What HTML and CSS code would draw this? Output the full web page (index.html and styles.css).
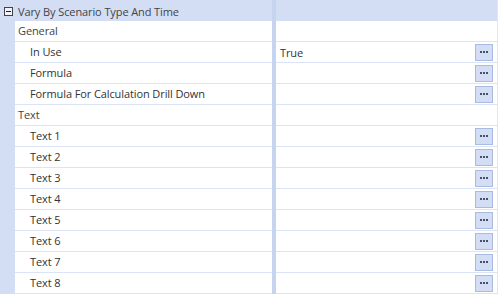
FILE: index.html
```html
<!DOCTYPE html>
<html lang="en">
  <head>
    <meta charset="UTF-8" />
    <title>Property Grid</title>
    <link rel="stylesheet" href="styles.css">
  </head>
  <body>
    <div class="grid">
      <div class="row header">
        <div class="gutter"><span class="toggle"></span></div>
        <div class="name">Vary By Scenario Type And Time</div>
        <div class="split"></div>
        <div class="value"></div>
      </div>

      <div class="row category">
        <div class="gutter"></div>
        <div class="name">General</div>
        <div class="split"></div>
        <div class="value"></div>
      </div>
      <div class="row">
        <div class="gutter"></div>
        <div class="name">In Use</div>
        <div class="split"></div>
        <div class="value"><span>True</span><button class="more"><i></i><i></i><i></i></button></div>
      </div>
      <div class="row">
        <div class="gutter"></div>
        <div class="name">Formula</div>
        <div class="split"></div>
        <div class="value"><span></span><button class="more"><i></i><i></i><i></i></button></div>
      </div>
      <div class="row">
        <div class="gutter"></div>
        <div class="name">Formula For Calculation Drill Down</div>
        <div class="split"></div>
        <div class="value"><span></span><button class="more"><i></i><i></i><i></i></button></div>
      </div>

      <div class="row category">
        <div class="gutter"></div>
        <div class="name">Text</div>
        <div class="split"></div>
        <div class="value"></div>
      </div>
      <div class="row">
        <div class="gutter"></div>
        <div class="name">Text 1</div>
        <div class="split"></div>
        <div class="value"><span></span><button class="more"><i></i><i></i><i></i></button></div>
      </div>
      <div class="row">
        <div class="gutter"></div>
        <div class="name">Text 2</div>
        <div class="split"></div>
        <div class="value"><span></span><button class="more"><i></i><i></i><i></i></button></div>
      </div>
      <div class="row">
        <div class="gutter"></div>
        <div class="name">Text 3</div>
        <div class="split"></div>
        <div class="value"><span></span><button class="more"><i></i><i></i><i></i></button></div>
      </div>
      <div class="row">
        <div class="gutter"></div>
        <div class="name">Text 4</div>
        <div class="split"></div>
        <div class="value"><span></span><button class="more"><i></i><i></i><i></i></button></div>
      </div>
      <div class="row">
        <div class="gutter"></div>
        <div class="name">Text 5</div>
        <div class="split"></div>
        <div class="value"><span></span><button class="more"><i></i><i></i><i></i></button></div>
      </div>
      <div class="row">
        <div class="gutter"></div>
        <div class="name">Text 6</div>
        <div class="split"></div>
        <div class="value"><span></span><button class="more"><i></i><i></i><i></i></button></div>
      </div>
      <div class="row">
        <div class="gutter"></div>
        <div class="name">Text 7</div>
        <div class="split"></div>
        <div class="value"><span></span><button class="more"><i></i><i></i><i></i></button></div>
      </div>
      <div class="row">
        <div class="gutter"></div>
        <div class="name">Text 8</div>
        <div class="split"></div>
        <div class="value"><span></span><button class="more"><i></i><i></i><i></i></button></div>
      </div>
    </div>
  </body>
</html>
```

FILE: styles.css
```css
body {
  margin: 0;
  background-color: white;
  font-family: "Open Sans", "Noto Sans", sans-serif;
  font-size: 11px;
  letter-spacing: -0.1px;
  color: #333;
}
.grid {
  width: 498px;
  border-right: 1px solid #dfe7f6;
  box-sizing: border-box;
}
.row {
  display: grid;
  grid-template-columns: 15px 257px 4px 1fr;
  height: 21px;
}
.row .gutter {
  background-color: #d3def4;
}
.row .name,
.row .value {
  display: flex;
  align-items: center;
  padding-bottom: 1px;
  border-bottom: 1px solid #dbe4f6;
  box-sizing: border-box;
  white-space: nowrap;
  overflow: hidden;
}
.row .name {
  padding-left: 15px;
}
.row .split {
  background-color: #c6d4ef;
}
.row .value {
  justify-content: space-between;
  padding: 0 4px 0 4px;
}
.row.category .name {
  padding-left: 3px;
  color: #444;
}
.row.header {
  background-color: #d3def4;
}
.row.header .name,
.row.header .value {
  border-bottom: none;
  padding-top: 1px;
  padding-bottom: 0;
  padding-left: 3px;
  color: #444;
}
.row.header .gutter {
  position: relative;
}
.toggle {
  position: absolute;
  left: 4px;
  top: 7px;
  width: 9px;
  height: 9px;
  border: 1px solid #444;
  box-sizing: border-box;
  background-color: #eef2fa;
}
.toggle::after {
  content: "";
  position: absolute;
  left: 1px;
  top: 3px;
  width: 5px;
  height: 1px;
  background-color: #222;
}
.more {
  width: 18px;
  height: 17px;
  padding: 0;
  margin: 0;
  border: 1px solid #a9bbe2;
  background-color: #d3def4;
  display: flex;
  align-items: center;
  justify-content: center;
  gap: 1px;
}
.more i {
  width: 2px;
  height: 2px;
  background-color: #46506a;
}
```
